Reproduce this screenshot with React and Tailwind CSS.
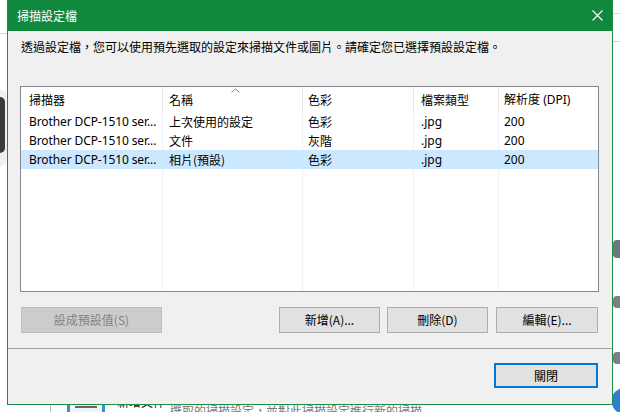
import React from "react";

const CJK = '"Noto Sans CJK TC", "Noto Sans", sans-serif';
const LAT = '"Noto Sans", "Noto Sans CJK TC", sans-serif';

const cols = [
  { w: "w-[142px]", pl: "pl-[8px]" },
  { w: "w-[140px]", pl: "pl-[6px]" },
  { w: "w-[111px]", pl: "pl-[5px]" },
  { w: "w-[85px]", pl: "pl-[7px]" },
  { w: "flex-1", pl: "pl-[5px]" },
];

const headers = ["掃描器", "名稱", "色彩", "檔案類型", "解析度 (DPI)"];
const rows = [
  ["Brother DCP-1510 ser...", "上次使用的設定", "色彩", ".jpg", "200"],
  ["Brother DCP-1510 ser...", "文件", "灰階", ".jpg", "200"],
  ["Brother DCP-1510 ser...", "相片(預設)", "色彩", ".jpg", "200"],
];

function Btn({ children, className = "", disabled }) {
  return (
    <div
      className={
        "flex items-center justify-center text-[12px] " +
        (disabled
          ? "bg-[#cccccc] border border-[#bfbfbf] text-[#838383] "
          : "bg-[#e1e1e1] border border-[#adadad] text-black ") +
        className
      }
      style={{ fontFamily: CJK }}
    >
      {children}
    </div>
  );
}

export default function App() {
  return (
    <div className="relative w-[620px] h-[412px] bg-white overflow-hidden">
      {/* desktop behind */}
      <div className="absolute left-0 top-[33px] w-[8px] h-px bg-[#d6d6d6]" />
      <div className="absolute left-[-20px] top-[88px] w-[30px] h-[80px] rounded-full bg-[#efefef]" />
      <div className="absolute left-[-6px] top-[97px] w-[11px] h-[56px] rounded-[5px] bg-[#3a3a3a]" />
      <div className="absolute left-[612px] top-[13px] w-[8px] h-px bg-[#d6d6d6]" />
      <div className="absolute left-[612px] top-[41px] w-[8px] h-px bg-[#d6d6d6]" />
      <div className="absolute left-[613px] top-[240px] w-[8px] h-[18px] rounded-l bg-[#6f767c]" />
      <div className="absolute left-[613px] top-[296px] w-[8px] h-[12px] rounded-l bg-[#7a8085]" />
      <div className="absolute left-[613px] top-[352px] w-[8px] h-[12px] rounded-l bg-[#7a8085]" />
      <div className="absolute left-[612px] top-[388px] w-[24px] h-[26px] rounded-full bg-[#2b7fd6]" />
      <div className="absolute left-[50px] top-[404px] w-px h-[10px] bg-[#bdbdbd]" />
      <div className="absolute left-[67px] top-[404px] w-[38px] h-[10px] border-x-[3px] border-[#3f8fc4] bg-[#eef4f8]">
        <div className="mx-auto mt-[2px] w-[22px] h-[2px] bg-[#666]" />
      </div>
      <div
        className="absolute left-[117px] top-[395px] text-[12px] leading-[14px] text-[#222] whitespace-nowrap"
        style={{ fontFamily: CJK }}
      >
        新增文件
      </div>
      <div
        className="absolute left-[170px] top-[404px] text-[12px] leading-[14px] text-[#777] whitespace-nowrap"
        style={{ fontFamily: CJK }}
      >
        選取的掃描設定，並對此掃描設定進行新的掃描
      </div>

      {/* dialog */}
      <div className="absolute left-[7px] top-0 w-[606px] h-[405px] border-x border-b border-[#1b8f4a] bg-[#f0f0f0] flex flex-col">
        <div className="h-[31px] bg-[#10893e] flex items-center justify-between pl-[9px] pr-[9px] shrink-0">
          <span className="text-white text-[12px] leading-none" style={{ fontFamily: CJK }}>
            掃描設定檔
          </span>
          <svg width="11" height="11" viewBox="0 0 11 11">
            <path d="M0.5 0.5 L10.5 10.5 M10.5 0.5 L0.5 10.5" stroke="white" strokeWidth="1.1" />
          </svg>
        </div>

        <div
          className="mt-[9px] ml-[13px] text-[12px] leading-[14px] text-black whitespace-nowrap"
          style={{ fontFamily: CJK }}
        >
          透過設定檔，您可以使用預先選取的設定來掃描文件或圖片。請確定您已選擇預設設定檔。
        </div>

        {/* list */}
        <div className="relative mt-[32px] ml-[12px] w-[579px] h-[206px] border border-[#828790] bg-white flex flex-col">
          <div className="flex h-[25px] shrink-0">
            {headers.map((h, i) => (
              <div
                key={i}
                className={`${cols[i].w} ${cols[i].pl} ${i < 4 ? "border-r border-[#e5e5e5]" : ""} flex items-center text-[12px] text-black whitespace-nowrap`}
                style={{ fontFamily: i === 4 ? LAT : CJK }}
              >
                {i === 4 ? (
                  <span>
                    <span style={{ fontFamily: CJK }}>解析度</span> (DPI)
                  </span>
                ) : (
                  h
                )}
              </div>
            ))}
          </div>
          <svg className="absolute left-[210px] top-[1px]" width="9" height="5" viewBox="0 0 9 5">
            <path d="M0.5 4.5 L4.5 0.8 L8.5 4.5" fill="none" stroke="#8a8a8a" strokeWidth="1" />
          </svg>
          {rows.map((r, ri) => {
            const sel = ri === 2;
            return (
              <div key={ri} className={`flex h-[19px] shrink-0 ${sel ? "bg-[#cce8ff]" : ""}`}>
                {r.map((c, i) => (
                  <div
                    key={i}
                    className={`${cols[i].w} ${cols[i].pl} ${i < 4 ? "border-r " + (sel ? "border-transparent" : "border-[#edf2f8]") : ""} flex items-center text-[12px] text-black whitespace-nowrap overflow-hidden`}
                    style={{ fontFamily: i === 0 || i === 3 || i === 4 ? LAT : CJK, letterSpacing: i === 0 ? "-0.1px" : undefined }}
                  >
                    {c}
                  </div>
                ))}
              </div>
            );
          })}
          <div className="flex flex-1">
            {cols.map((c, i) => (
              <div key={i} className={`${c.w} ${i < 4 ? "border-r border-[#edf2f8]" : ""}`} />
            ))}
          </div>
        </div>

        {/* buttons */}
        <div className="mt-[15px] ml-[13px] flex h-[26px]">
          <Btn disabled className="w-[141px]">
            設成預設值(S)
          </Btn>
          <Btn className="w-[101px] ml-[117px]">新增(A)...</Btn>
          <Btn className="w-[101px] ml-[7px]">刪除(D)</Btn>
          <Btn className="w-[102px] ml-[8px]">編輯(E)...</Btn>
        </div>

        <div className="mt-[15px] border-t border-[#a0a0a0] h-px bg-white" />

        <div className="flex justify-end pr-[14px] pt-[14px]">
          <div
            className="w-[104px] h-[25px] border-2 border-[#0078d7] bg-[#e1e1e1] flex items-center justify-center text-[12px] text-black"
            style={{ fontFamily: CJK }}
          >
            關閉
          </div>
        </div>
      </div>
    </div>
  );
}
